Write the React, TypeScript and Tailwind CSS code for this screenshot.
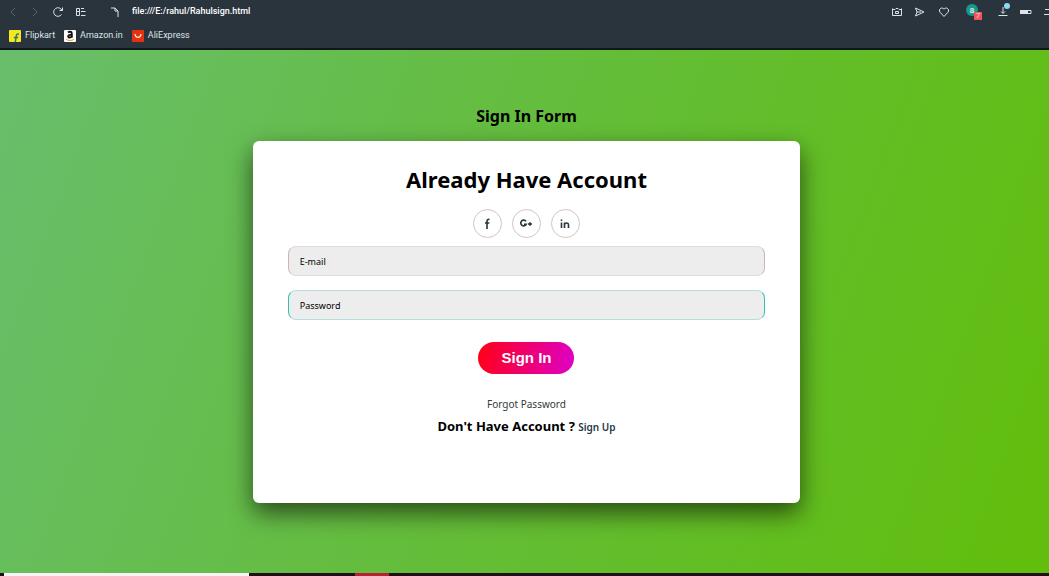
import type { ReactNode } from "react";

type Bookmark = {
    label: string;
    icon: ReactNode;
};

const bookmarks: Bookmark[] = [
    {
        label: "Flipkart",
        icon: (
            <svg viewBox="0 0 12 12" className="size-3">
                <rect width="12" height="12" rx="1" fill="#f8e71c" />
                <path d="M10 4.200C8 3.600 7.500 4.600 7.200 6.200L6.300 12M4.800 7.500H9.200" fill="none" stroke="#2f7a78" strokeWidth="1.500" />
            </svg>
        ),
    },
    {
        label: "Amazon.in",
        icon: (
            <svg viewBox="0 0 12 12" className="size-3">
                <rect width="12" height="12" rx="1" fill="#fff" />
                <path d="M4 2.500C5.500 1.200 7.800 1.600 7.800 3.400V7.800M7.800 4.600C5.500 4.600 4.200 5 4.200 6.300C4.200 8 6.800 8 7.800 6.200" fill="none" stroke="#111" strokeWidth="1.900" />
                <path d="M2 9.300C4.500 11 7.500 11 10 9.300" fill="none" stroke="#f59b1c" />
            </svg>
        ),
    },
    {
        label: "AliExpress",
        icon: (
            <svg viewBox="0 0 12 12" className="size-3">
                <rect width="12" height="12" rx="1" fill="#e43110" />
                <path d="M3 4C3.500 8.500 8.500 8.500 9 4" fill="none" stroke="#ffe3d4" strokeWidth="1.300" />
            </svg>
        ),
    },
];

const BrowserBar = () => {
    return (
        <header className="border-b-2 border-[#101719] bg-[#2a343d] font-['Roboto',sans-serif] text-[#dde3e7]">
            <div className="flex h-[23px] items-center justify-between overflow-hidden pl-2">
                <div className="flex items-center">
                    <button type="button" aria-label="Back" className="mr-3 text-[#56616a]">
                        <svg viewBox="0 0 10 10" className="size-[10px]" fill="none" stroke="currentColor">
                            <path d="M7 1L3 5L7 9" />
                        </svg>
                    </button>
                    <button type="button" aria-label="Forward" className="mr-3 text-[#56616a]">
                        <svg viewBox="0 0 10 10" className="size-[10px]" fill="none" stroke="currentColor">
                            <path d="M3 1L7 5L3 9" />
                        </svg>
                    </button>
                    <button type="button" aria-label="Reload" className="mr-3">
                        <svg viewBox="0 0 12 12" className="size-3" fill="none" stroke="currentColor">
                            <path d="M9.500 8.500A4.300 4.300 0 1 1 10 4.500M10.500 1.500V4.500H7.500" />
                        </svg>
                    </button>
                    <button type="button" aria-label="Speed dial" className="mr-6">
                        <svg viewBox="0 0 10 10" className="size-[10px]" fill="none" stroke="currentColor">
                            <path d="M.5 1.500H3.500V4.500H.5ZM.5 4.500H3.500V8.500H.5ZM5 1.500H8M5 4.500H9.500M5 8.500H9.500" />
                        </svg>
                    </button>
                    <svg viewBox="0 0 10 12" className="mr-3 h-3 w-[10px]" fill="none" stroke="currentColor">
                        <path d="M1 2H5L8 5V11M5 2V5H8" />
                    </svg>
                    <input
                        aria-label="Address"
                        defaultValue="file:///E:/rahul/Rahulsign.html"
                        className="w-64 bg-transparent text-[9px] font-medium text-white outline-none"
                    />
                </div>
                <div className="flex items-center">
                    <button type="button" aria-label="Snapshot" className="mr-3">
                        <svg viewBox="0 0 10 10" className="size-[10px]" fill="none" stroke="currentColor">
                            <path d="M.5 1.500V8.500H9.500V1.500M.5 2.500H3L4 1.500H6L7 2.500H9M3.500 4.500H6.500V6.500H3.500Z" />
                        </svg>
                    </button>
                    <button type="button" aria-label="Send" className="mr-3">
                        <svg viewBox="0 0 12 10" className="h-[10px] w-3" fill="none" stroke="currentColor">
                            <path d="M1.500 1L10 5L1.500 9L3 5ZM3 5H7" />
                        </svg>
                    </button>
                    <button type="button" aria-label="Favourites" className="mr-4">
                        <svg viewBox="0 0 12 12" className="size-3" fill="none" stroke="currentColor">
                            <path d="M6 10.500L2 6.200C0 3.600 3.500 .2 6 3.200C8.500 .2 12 3.600 10 6.200Z" />
                        </svg>
                    </button>
                    <button type="button" aria-label="Account" className="relative mr-5 mb-1 size-3 rounded-full bg-[#179a8c] text-[9px] leading-3 font-bold">
                        a
                        <span className="absolute top-2 left-2 size-2 bg-[#f5535c] text-[8px] leading-2 font-normal">7</span>
                    </button>
                    <button type="button" aria-label="Downloads" className="relative mr-3">
                        <svg viewBox="0 0 10 10" className="size-[10px]" fill="none" stroke="currentColor">
                            <path d="M5 0V6M3 4.500L5 6.500L7 4.500M.5 8.500H9.500" />
                        </svg>
                        <span className="absolute -top-1 left-[6px] size-[6px] rounded-full bg-[#8dd8fa]" />
                    </button>
                    <svg viewBox="0 0 12 6" className="mr-3 h-[6px] w-3">
                        <path d="M0 1H8V5H0Z" fill="currentColor" />
                        <path d="M8 1.500H11V4.500H8" fill="none" stroke="currentColor" />
                    </svg>
                    <svg viewBox="0 0 5 8" className="h-2 w-[5px]" stroke="currentColor">
                        <path d="M1 1.500H5M0 6.500H5" />
                    </svg>
                </div>
            </div>
            <nav className="flex h-[25px] items-center gap-[9px] pl-[9px]">
                {bookmarks.map((bookmark) => (
                    <a key={bookmark.label} href="#" className="flex items-center gap-1 text-[9px]">
                        {bookmark.icon}
                        {bookmark.label}
                    </a>
                ))}
            </nav>
        </header>
    );
};

const socials = [
    { name: "Facebook", path: "M8.500 1.500C6.500 1 6 2 6 3.500V11M4 5H8.300" },
    { name: "Google Plus", path: "M6 3.300A2.900 2.900 0 1 0 6.300 6.200H4M8 6H12M10 4.300V7.700" },
    { name: "LinkedIn", path: "M2.500 4.500V10M2.500 1.500V3M5.500 10V4.500M5.500 6.500C6.500 4.500 9.500 4.500 9.500 6.800V10" },
];

const SignInCard = () => {
    return (
        <form
            onSubmit={(event) => event.preventDefault()}
            className="mt-[11px] flex w-[52.4%] flex-col items-center rounded-md bg-white px-[35px] pt-6 pb-16 shadow-[0_10px_25px_rgba(0,0,0,0.6)]"
        >
            <h2 className="text-[22px] leading-7 font-bold">Already Have Account</h2>
            <div className="mt-4 flex gap-[10px]">
                {socials.map((social) => (
                    <a
                        key={social.name}
                        href="#"
                        aria-label={social.name}
                        className="flex size-[29px] items-center justify-center rounded-full border border-[#d3c4c8] text-[#29343c]"
                    >
                        <svg viewBox="0 0 12 12" className="size-3" fill="none" stroke="currentColor" strokeWidth="1.600">
                            <path d={social.path} />
                        </svg>
                    </a>
                ))}
            </div>
            <input
                type="email"
                aria-label="E-mail"
                placeholder="E-mail"
                className="mt-2 h-[30px] w-full rounded-lg border border-x-[#cbb4b6] border-y-[#e2dadb] bg-[#ededed] px-[11px] text-[9px] outline-none placeholder:text-black"
            />
            <input
                type="password"
                aria-label="Password"
                placeholder="Password"
                className="mt-[14px] h-[30px] w-full rounded-lg border border-x-[#35beb2] border-y-[#b5dfdb] bg-[#ededed] px-[11px] text-[9px] outline-none placeholder:text-black"
            />
            <button
                type="submit"
                className="mt-[22px] h-8 w-24 rounded-full bg-linear-[100deg] from-[#ff0015] to-[#de00c8] font-['Liberation_Sans',sans-serif] text-[15px] font-bold text-white"
            >
                Sign In
            </button>
            <a href="#" className="mt-5 text-[10px] leading-5 text-[#343a40]">
                Forgot Password
            </a>
            <p className="text-[13px] leading-6 font-bold">
                Don't Have Account ?{" "}
                <a href="#" className="text-[10px] font-semibold text-[#263743]">
                    Sign Up
                </a>
            </p>
        </form>
    );
};

const Taskbar = () => {
    return (
        <footer className="flex h-[3px] bg-[#210e1b] pl-1">
            <div className="w-[23.4%] bg-[#f5f5f5]" />
            <div className="ml-[10.2%] w-[3.2%] bg-[#b91f35]" />
        </footer>
    );
};

export default function App() {
    return (
        <div className="flex min-h-screen flex-col font-['Noto_Sans','Open_Sans',sans-serif] text-black">
            <BrowserBar />
            <main className="flex grow flex-col items-center bg-linear-[110deg] from-[#68be6c] via-[#64bd38] to-[#61be0b] pt-13 pb-4 pl-1">
                <h1 className="text-base leading-7 font-bold">Sign In Form</h1>
                <SignInCard />
            </main>
            <Taskbar />
        </div>
    );
}
